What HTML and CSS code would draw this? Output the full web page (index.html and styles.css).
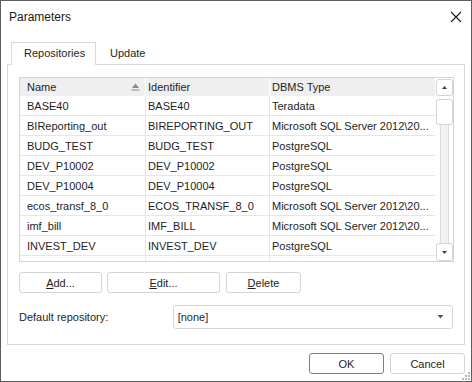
FILE: index.html
```html
<!DOCTYPE html>
<html>
<head>
<meta charset="utf-8">
<link rel="stylesheet" href="styles.css">
</head>
<body>
<div class="dialog">
  <div class="titlebar">
    <span class="title">Parameters</span>
    <svg class="close" width="12" height="12" viewBox="0 0 12 12"><path d="M1 1 L11 11 M11 1 L1 11" stroke="#1a1a1a" stroke-width="1.1" fill="none"/></svg>
  </div>
  <div class="tabs">
    <div class="tab active">Repositories</div>
    <div class="tab">Update</div>
  </div>
  <div class="panel">
    <div class="grid">
      <div class="cols">
        <div class="row head">
          <div class="c c1">Name<svg class="sort" width="9" height="8" viewBox="0 0 9 8"><path d="M4.5 0.5 L8 5 L1 5 Z" fill="#8a8a8a"/><rect x="0.5" y="6.5" width="8" height="1" fill="#8a8a8a"/></svg></div>
          <div class="c c2">Identifier</div>
          <div class="c c3">DBMS Type</div>
        </div>
        <div class="row"><div class="c c1">BASE40</div><div class="c c2">BASE40</div><div class="c c3">Teradata</div></div>
        <div class="row"><div class="c c1">BIReporting_out</div><div class="c c2">BIREPORTING_OUT</div><div class="c c3">Microsoft SQL Server 2012\20...</div></div>
        <div class="row"><div class="c c1">BUDG_TEST</div><div class="c c2">BUDG_TEST</div><div class="c c3">PostgreSQL</div></div>
        <div class="row"><div class="c c1">DEV_P10002</div><div class="c c2">DEV_P10002</div><div class="c c3">PostgreSQL</div></div>
        <div class="row"><div class="c c1">DEV_P10004</div><div class="c c2">DEV_P10004</div><div class="c c3">PostgreSQL</div></div>
        <div class="row"><div class="c c1">ecos_transf_8_0</div><div class="c c2">ECOS_TRANSF_8_0</div><div class="c c3">Microsoft SQL Server 2012\20...</div></div>
        <div class="row"><div class="c c1">imf_bill</div><div class="c c2">IMF_BILL</div><div class="c c3">Microsoft SQL Server 2012\20...</div></div>
        <div class="row"><div class="c c1">INVEST_DEV</div><div class="c c2">INVEST_DEV</div><div class="c c3">PostgreSQL</div></div>
        <div class="row"><div class="c c1"></div><div class="c c2"></div><div class="c c3"></div></div>
      </div>
      <div class="vscroll">
        <div class="sbtn"><svg width="5" height="3" viewBox="0 0 5 3"><path d="M2.5 0 L5 3 L0 3 Z" fill="#404040"/></svg></div>
        <div class="track">
          <div class="thumb"></div>
          <div class="rail"></div>
        </div>
        <div class="sbtn down"><svg width="5" height="3" viewBox="0 0 5 3"><path d="M0 0 L5 0 L2.5 3 Z" fill="#404040"/></svg></div>
      </div>
    </div>
    <div class="buttons">
      <div class="btn b-add"><u>A</u>dd...</div>
      <div class="btn b-edit"><u>E</u>dit...</div>
      <div class="btn b-del"><u>D</u>elete</div>
    </div>
    <div class="defrow">
      <span class="label">Default repository:</span>
      <div class="combo"><span>[none]</span><svg width="7" height="4" viewBox="0 0 7 4"><path d="M0.5 0 L6.5 0 L3.5 3.5 Z" fill="#555"/></svg></div>
    </div>
  </div>
  <div class="footer">
    <div class="btn ok">OK</div>
    <div class="btn cancel">Cancel</div>
  </div>
  <svg class="grip" width="10" height="10" viewBox="0 0 10 10">
    <rect x="7" y="1" width="2" height="2" fill="#b8b8b8"/>
    <rect x="4" y="4" width="2" height="2" fill="#b8b8b8"/>
    <rect x="7" y="4" width="2" height="2" fill="#b8b8b8"/>
    <rect x="1" y="7" width="2" height="2" fill="#b8b8b8"/>
    <rect x="4" y="7" width="2" height="2" fill="#b8b8b8"/>
    <rect x="7" y="7" width="2" height="2" fill="#b8b8b8"/>
  </svg>
</div>
</body>
</html>
```

FILE: styles.css
```css
* { box-sizing: border-box; }
html, body { margin: 0; padding: 0; background: #fff; }
body {
  font-family: "Liberation Sans", Arial, sans-serif;
  font-size: 11px;
  color: #1e1e1e;
}
.dialog {
  position: relative;
  width: 472px;
  height: 382px;
  border: 1px solid #5d5d5d;
  background: #fff;
  display: flex;
  flex-direction: column;
}
.titlebar {
  height: 31px;
  display: flex;
  align-items: center;
  justify-content: space-between;
  padding: 0 9px 0 8px;
}
.title { font-size: 12px; color: #1a1a1a; }
.tabs {
  display: flex;
  margin: 10px 0 0 10px;
  height: 23px;
  position: relative;
  z-index: 1;
}
.tab {
  height: 23px;
  line-height: 22px;
  padding: 0 14px 0 12px;
}
.tab.active {
  width: 85px;
  border: 1px solid #d9d9d9;
  border-bottom: none;
  background: #fff;
  height: 23px;
  line-height: 20px;
}
.tab:not(.active) { padding-left: 14px; }
.panel {
  margin: -1px 6px 0 6px;
  height: 281px;
  border: 1px solid #d9d9d9;
  padding: 12px 11px 0 11px;
}
.grid {
  width: 435px;
  height: 185px;
  border: 1px solid #d4d4d4;
  display: flex;
  overflow: hidden;
}
.cols { width: 415px; overflow: hidden; }
.row {
  display: flex;
  height: 20px;
  border-bottom: 1px solid #e6e6e6;
  padding-top: 1px;
}
.row.head {
  height: 18px;
  background: #efefef;
  border-bottom: none;
  padding-top: 0;
}
.c {
  height: 100%;
  display: flex;
  align-items: center;
  white-space: nowrap;
  overflow: hidden;
  border-right: 1px solid #e6e6e6;
  padding-left: 2px;
}
.row:not(.head) .c { margin-top: -1px; height: calc(100% + 1px); padding-top: 1px; }
.head .c { border-right: 1px solid #fff; }
.c1 { width: 126px; padding-left: 7px; }
.c2 { width: 124px; }
.c3 { width: 165px; border-right: none; }
.head .c3 { border-right: none; }
.sort { margin-left: auto; margin-right: 5px; }
.vscroll {
  width: 18px;
  display: flex;
  flex-direction: column;
  padding: 1px 0 0 1px;
}
.sbtn {
  width: 17px;
  height: 17px;
  border: 1px solid #d4d4d4;
  border-radius: 3px;
  background: #fff;
  display: flex;
  align-items: center;
  justify-content: center;
}
.sbtn.down { height: 18px; }
.track {
  flex: 1;
  display: flex;
  flex-direction: column;
  align-items: center;
  padding-top: 3px;
}
.rail {
  width: 9px;
  flex: 1;
  background: #f2f2f2;
  border-left: 1px solid #dcdcdc;
  border-right: 1px solid #dcdcdc;
}
.thumb {
  width: 17px;
  height: 26px;
  border: 1px solid #d4d4d4;
  border-radius: 3px;
  background: #fff;
}
.buttons {
  display: flex;
  margin-top: 10px;
  height: 21px;
}
.btn {
  height: 21px;
  border: 1px solid #d4d4d4;
  border-radius: 3px;
  background: #fff;
  display: flex;
  align-items: center;
  justify-content: center;
}
.btn u { text-decoration: underline; text-underline-offset: 1px; }
.b-add { width: 83px; }
.b-edit { width: 113px; margin-left: 5px; }
.b-del { width: 75px; margin-left: 6px; }
.defrow {
  display: flex;
  align-items: center;
  margin-top: 12px;
  height: 24px;
}
.label { width: 154px; }
.combo {
  width: 281px;
  height: 24px;
  border: 1px solid #d6d6d6;
  border-radius: 3px;
  display: flex;
  align-items: center;
  justify-content: space-between;
  padding: 0 8px 0 4px;
}
.footer {
  display: flex;
  justify-content: flex-end;
  margin-top: 8px;
  padding-right: 6px;
}
.ok { width: 75px; border-color: #3c8ed6; }
.cancel { width: 75px; margin-left: 6px; }
.grip { position: absolute; right: 0; bottom: 0; }
```
